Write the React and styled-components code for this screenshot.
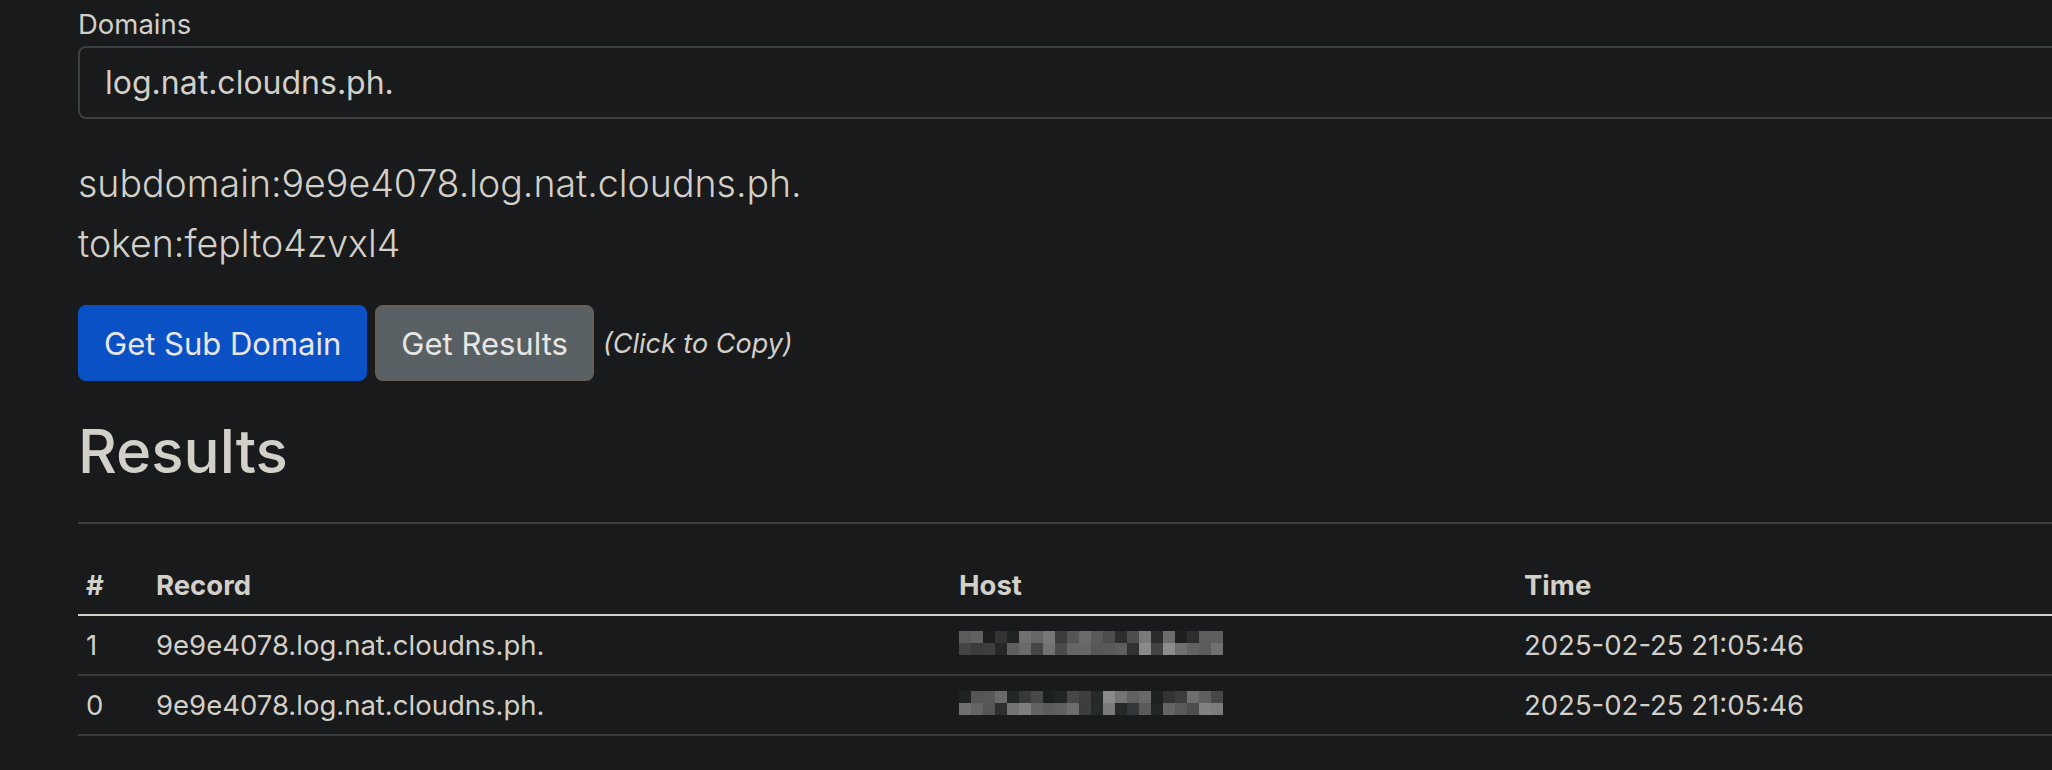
import React from 'react'
import styled, { createGlobalStyle } from 'styled-components'

const GlobalStyle = createGlobalStyle`
  html, body {
    margin: 0;
    background: #181a1b;
    overflow: hidden;
  }
  body {
    font-family: Inter, 'Noto Sans', sans-serif;
    color: #d3cfc9;
  }
`

const rows = [
  {
    id: 1,
    record: '9e9e4078.log.nat.cloudns.ph.',
    time: '2025-02-25 21:05:46',
    blur: [
      ['#5b5b5b', '#616161', '#1c1e1f', '#333333', '#202323', '#717171', '#666666', '#777777', '#3b3d3d', '#555555', '#6a6a6a', '#5a5a5a', '#4c4c4c', '#2c2d2d', '#4e4e4e', '#7a7a7a', '#2a2b2b', '#6c6c6c', '#1d1f20', '#2c2e2e', '#5d5d5d', '#5e5e5e'],
      ['#444444', '#3b3b3b', '#3d3f3f', '#262828', '#5f5f5f', '#6a6a6a', '#454747', '#727272', '#4b4b4b', '#666666', '#666666', '#575757', '#595959', '#5e5e5e', '#2f3132', '#8a8a8a', '#424343', '#8c8c8c', '#6f6f6f', '#626262', '#5c5c5c', '#707070'],
    ],
  },
  {
    id: 0,
    record: '9e9e4078.log.nat.cloudns.ph.',
    time: '2025-02-25 21:05:46',
    blur: [
      ['#1f2222', '#555555', '#585858', '#6a6a6a', '#232626', '#383a3a', '#474949', '#1c1f1f', '#222525', '#474747', '#3e3e3e', '#262929', '#8a8a8a', '#737373', '#616161', '#6a6a6a', '#1e2121', '#333333', '#3d3d3d', '#6d6d6d', '#5f5f5f', '#474747'],
      ['#707070', '#646464', '#555555', '#2d2f2f', '#737373', '#7e7e7e', '#626262', '#5c5c5c', '#606060', '#6c6c6c', '#3c3e3e', '#262a2a', '#7a7a7a', '#25292a', '#333639', '#5a5a5a', '#222525', '#646464', '#595959', '#4d4d4d', '#818181', '#7c7c7c'],
    ],
  },
]

function Pixelated({ blocks }) {
  return (
    <BlurSvg width={264} height={24} viewBox="0 0 264 24">
      {blocks.map((line, r) =>
        line.map((c, i) => <rect key={r + '-' + i} x={i * 12} y={r * 12} width={12} height={12} fill={c} />)
      )}
    </BlurSvg>
  )
}

function App() {
  return (
    <Page>
      <GlobalStyle />
      <FieldLabel>Domains</FieldLabel>
      <DomainInput defaultValue="log.nat.cloudns.ph." />

      <Info>
        <div>subdomain:9e9e4078.log.nat.cloudns.ph.</div>
        <div>token:feplto4zvxl4</div>
      </Info>

      <Actions>
        <ActionButton variant="primary">Get Sub Domain</ActionButton>
        <ActionButton variant="secondary">Get Results</ActionButton>
        <Hint>(Click to Copy)</Hint>
      </Actions>

      <Heading>Results</Heading>
      <Rule />

      <ResultsTable>
        <colgroup>
          <col style={{ width: 70 }} />
          <col style={{ width: 803 }} />
          <col style={{ width: 565 }} />
          <col />
        </colgroup>
        <thead>
          <tr>
            <Th>#</Th>
            <Th>Record</Th>
            <Th>Host</Th>
            <Th>Time</Th>
          </tr>
        </thead>
        <tbody>
          {rows.map(row => (
            <tr key={row.id}>
              <Td>{row.id}</Td>
              <Td>{row.record}</Td>
              <Td><Pixelated blocks={row.blur} /></Td>
              <Td>{row.time}</Td>
            </tr>
          ))}
        </tbody>
      </ResultsTable>
    </Page>
  )
}

const Page = styled.div`
  width: 2300px;
  box-sizing: border-box;
  padding: 3px 0 0 78px;
`

const FieldLabel = styled.label`
  display: block;
  font-size: 27.5px;
  line-height: 42px;
  margin-bottom: 1px;
`

const DomainInput = styled.input`
  display: block;
  width: 100%;
  height: 73px;
  box-sizing: border-box;
  margin: 0;
  padding: 0 25px;
  font-family: Inter, 'Noto Sans', sans-serif;
  font-size: 32px;
  color: #d3cfc9;
  background: #181a1b;
  border: 2px solid #3b4043;
  border-radius: 8px;
  :focus { outline: none; }
`

const Info = styled.div`
  margin-top: 35px;
  font-size: 37.5px;
  font-weight: 300;
  line-height: 60px;
`

const Actions = styled.div`
  display: flex;
  align-items: center;
  gap: 8px;
  margin-top: 31px;
`

const ActionButton = styled.button`
  height: 76px;
  box-sizing: border-box;
  padding: 0 24px;
  font-family: Inter, 'Noto Sans', sans-serif;
  font-size: 31px;
  color: #e8e6e3;
  background: ${p => (p.variant === 'primary' ? '#0a51c6' : '#596064')};
  border: 2px solid ${p => (p.variant === 'primary' ? '#0a51c6' : '#675f56')};
  border-radius: 8px;
  cursor: pointer;
`

const Hint = styled.i`
  margin-left: 1px;
  font-size: 27px;
  color: #d3cfc9;
`

const Heading = styled.h2`
  margin: 32px 0 0;
  font-size: 60px;
  font-weight: 500;
  line-height: 76.8px;
`

const Rule = styled.hr`
  margin: 32px 0 0;
  height: 0;
  border: 0;
  border-top: 2px solid #3b3f42;
`

const ResultsTable = styled.table`
  width: 2200px;
  margin-top: 32px;
  border-collapse: collapse;
  table-layout: fixed;
  font-size: 27.5px;
  line-height: 42px;
`

const Th = styled.th`
  padding: 8px;
  text-align: left;
  font-weight: 700;
  border-bottom: 2px solid #d3cfc9;
`

const Td = styled.td`
  padding: 8px;
  text-align: left;
  border-bottom: 2px solid #373b3d;
`

const BlurSvg = styled.svg`
  display: block;
  margin: 7px 0 11px;
`

export default App
